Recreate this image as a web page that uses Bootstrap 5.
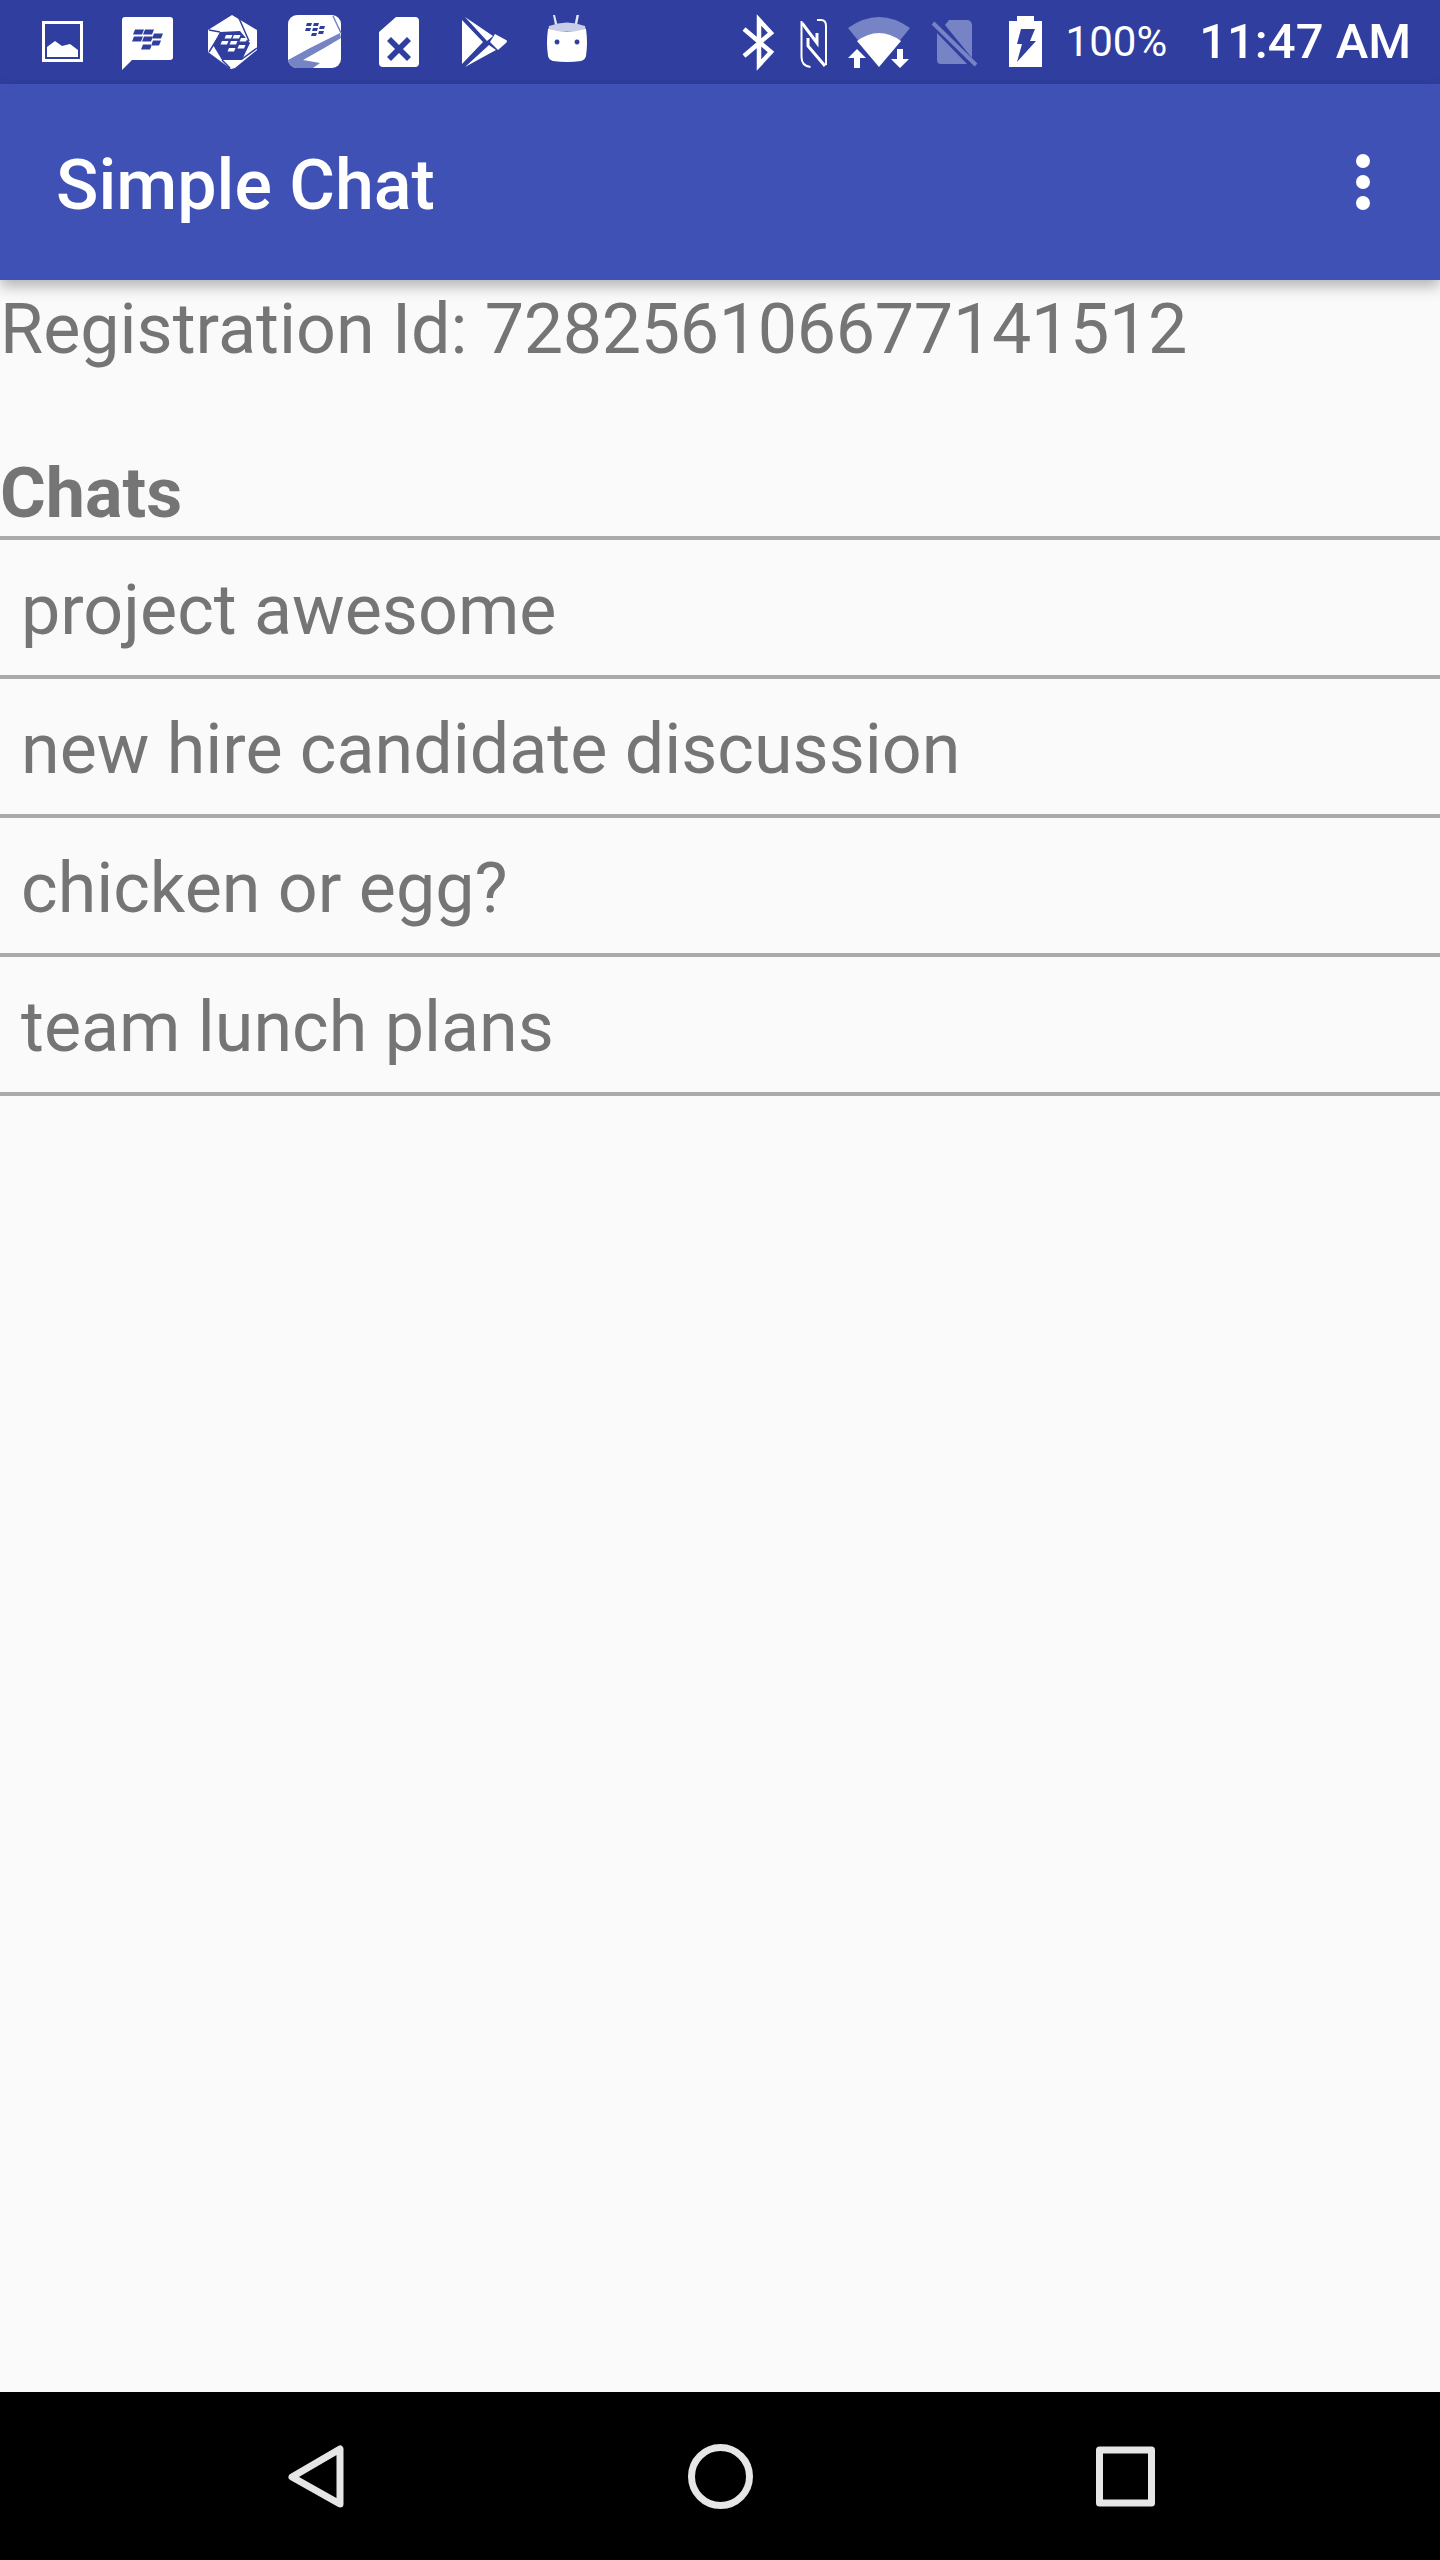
<!DOCTYPE html>
<html lang="en">
<head>
    <meta charset="UTF-8">
    <meta name="viewport" content="width=device-width, initial-scale=1.0">
    <title>Simple Chat</title>
    <link href="https://cdn.jsdelivr.net/npm/bootstrap@5.3.2/dist/css/bootstrap.min.css" rel="stylesheet">
    <style>
        body {
            background-color: #fafafa;
            color: #757575;
            font-family: Roboto, "Liberation Sans", sans-serif;
            font-size: 70px;
            line-height: 82px;
        }

        .status-strip {
            height: 84px;
            background: #303f9f;
            color: #fff;
            padding-left: 21px;
            padding-right: 29px;
        }

        .status-strip svg {
            display: block;
            height: 84px;
            fill: #fff;
        }

        .status-cell { width: 84px; }
        .sys-bt { width: 58px; }
        .sys-nfc { width: 50px; }
        .sys-wifi { width: 83px; }
        .sys-sim { width: 73px; }
        .sys-batt { width: 61px; }
        .battery-text { font-size: 42px; line-height: 84px; margin-left: 12px; }
        .clock-text { font-size: 49px; line-height: 84px; font-weight: 500; margin-left: 32px; }

        .app-strip {
            height: 196px;
            background: #3f51b5;
            color: #fff;
            padding-left: 56px;
            padding-right: 70px;
            box-shadow: 0 6px 14px rgba(0, 0, 0, .3);
            position: relative;
            font-weight: 500;
        }

        .app-title { padding-top: 6px; }
        .menu-dots { gap: 7px; }

        .menu-dot {
            width: 14px;
            height: 14px;
            background: #fff;
            border-radius: 50%;
        }

        .reg-line { padding-top: 8px; }
        .reg-digits { letter-spacing: -.33px; }
        .chats-head { margin-top: 82px; padding-bottom: 2px; font-weight: 700; }

        .chat-rows { border-radius: 0; border-top: 4px solid #aaa; }
        .chat-rows .list-group-item,
        .chat-rows .list-group-item:last-child {
            height: 139px;
            padding: 5px 0 0 21px;
            background: transparent;
            color: #757575;
            border: 0;
            border-bottom: 4px solid #aaa;
            display: flex;
            align-items: center;
        }

        .nav-strip { height: 168px; background: #000; }
        .nav-cell { width: 480px; height: 168px; }
        .nav-strip svg { display: block; fill: none; stroke: #e6e6e6; stroke-width: 7; }
    </style>
</head>

<body class="d-flex flex-column vh-100 overflow-hidden">
    <div class="status-strip d-flex align-items-center flex-shrink-0">
        <!-- notification icons, one 84px cell each -->
        <svg class="status-cell" viewBox="21 0 84 84">
            <path fill-rule="evenodd" d="M42 21h41v41H42zM45 24v35h35V24z"/>
            <path d="M47 57V47l8-6 7 5 8-2 8 6v7z"/>
        </svg>
        <svg class="status-cell" viewBox="105 0 84 84">
            <path fill-rule="evenodd" d="M125 17h45a3 3 0 0 1 3 3v37a3 3 0 0 1-3 3h-38l-10 10V20a3 3 0 0 1 3-3zM135 29.500l-2 5h9l2-5zM145 29.500l-2 5h9l2-5zM134 36.500l-2 5h9l2-5zM144 36.500l-2 5h9l2-5zM154 33.500l-2 5h9l2-5zM153 40.500l-2 5h8l2-5zM143 44.500l-2 5h9l2-5z"/>
        </svg>
        <svg class="status-cell" viewBox="189 0 84 84">
            <path fill-rule="evenodd" d="M232 15l25 15v20l-22 18-4 1-23-17V30zM220 32l-7 13 9 15h20l8-17-10-12z"/>
            <path d="M226 35l-1.500 3.500h6.500l1.500-3.500zM234 35l-1.500 3.500h6.500l1.500-3.500zM222 41l-1.500 3.500h6.500l1.500-3.500zM231 41l-1.500 3.500h6.500l1.500-3.500zM241 38l-1.500 3.500h6.500l1.500-3.500zM239 45l-1.500 3.500h6.500l1.500-3.500zM229 48l-1.500 3.500h6.500l1.500-3.500z"/>
            <path d="M238 16l11 25M257 48l-15 11M230 68l-8-8M209 52l12-19M209 30l11 2" fill="none" stroke="#303f9f" stroke-width="1.500"/>
        </svg>
        <svg class="status-cell" viewBox="273 0 84 84">
            <rect x="288" y="15" width="53" height="53" rx="9"/>
            <path d="M288 60l22-12 30-15 1 5-15 9-23 13 17 3-7 5h-15a9 9 0 0 1-10-8z" fill="#7683c4"/>
            <path d="M333 16l8 17" fill="none" stroke="#7683c4" stroke-width="1.500"/>
            <path d="M307 23l-1 3h5l1-3zM314 23l-1 3h5l1-3zM306 28l-1 3h5l1-3zM313 28l-1 3h5l1-3zM320 26l-1 3h5l1-3zM319 31l-1 3h5l1-3zM312 33l-1 3h5l1-3z" fill="#303f9f"/>
        </svg>
        <svg class="status-cell" viewBox="357 0 84 84">
            <path fill-rule="evenodd" d="M396 17h19a4 4 0 0 1 4 4v42a4 4 0 0 1-4 4h-32a4 4 0 0 1-4-4V32zM391 37l-4 4 8 8-8 8 4 4 8-8 8 8 4-4-8-8 8-8-4-4-8 8z"/>
        </svg>
        <svg class="status-cell" viewBox="441 0 84 84">
            <path d="M462 20v44l21-22zM465 17l28 19-6 5zM495 34l11 6q2 1 0 3l-8 7-8-8zM489 45l7 5-31 17z"/>
        </svg>
        <svg class="status-cell" viewBox="525 0 84 84">
            <path d="M555 15l2.500 10h-2.500l-2-10zM579 15l-2 10h-2.500l2-10z" fill="#e4e6f4"/>
            <path d="M549 26q18-7 36 0l1 5H548z" fill="#c8cde8"/>
            <path fill-rule="evenodd" d="M548 29q19 5 38 0 2 14 0 27-1 4-5 5-14 2-28 0-4-1-5-5-2-13 0-27zM557 39.500a2.500 2.500 0 1 0 .1 0zM577 39.500a2.500 2.500 0 1 0 .1 0z"/>
        </svg>

        <!-- system icons -->
        <svg class="sys-bt ms-auto" viewBox="730 0 58 84">
            <path d="M745 29l27 23-12 13V20l12 13-27 23" fill="none" stroke="#fff" stroke-width="4.500"/>
        </svg>
        <svg class="sys-nfc" viewBox="788 0 50 84">
            <path d="M802.500 21v36q0 9 9 10M818 20h4q5 0 5 6v39" fill="none" stroke="#fff" stroke-width="2"/>
            <path d="M803 23l15 20V33M809 38v8l17 20" fill="none" stroke="#fff" stroke-width="3"/>
        </svg>
        <svg class="sys-wifi" viewBox="838 0 83 84">
            <path d="M849 28q31-22 62 0l-31 38z" fill="#7683c4"/>
            <path d="M858 41q22-16 44 0l-22 26z"/>
            <path d="M855 68v-10h-6l9-9 9 9h-6v10zM898 49h6v10h6l-9 9-9-9h6z" stroke="#303f9f" stroke-width="2" paint-order="stroke"/>
        </svg>
        <svg class="sys-sim" viewBox="921 0 73 84">
            <path d="M950 20h18a5 5 0 0 1 5 5v33l-27-33zM938 33l30 31h-26a4 4 0 0 1-4-4z" fill="#7683c4"/>
            <path d="M934 23l43 42" fill="none" stroke="#7683c4" stroke-width="4"/>
        </svg>
        <svg class="sys-batt" viewBox="994 0 61 84">
            <path fill-rule="evenodd" d="M1018 16h17v5h8v46h-33V21h8zM1022 29l-4 15h5l-5 18 19-21h-6l5-12z"/>
        </svg>
        <span class="battery-text">100%</span>
        <span class="clock-text">11:47 AM</span>
    </div>

    <div class="app-strip d-flex align-items-center justify-content-between flex-shrink-0">
        <span class="app-title">Simple Chat</span>
        <div class="menu-dots d-flex flex-column">
            <span class="menu-dot"></span>
            <span class="menu-dot"></span>
            <span class="menu-dot"></span>
        </div>
    </div>

    <main class="flex-grow-1">
        <div class="reg-line">Registration Id: <span class="reg-digits">728256106677141512</span></div>
        <div class="chats-head">Chats</div>
        <ul class="list-group list-group-flush chat-rows">
            <li class="list-group-item">project awesome</li>
            <li class="list-group-item">new hire candidate discussion</li>
            <li class="list-group-item">chicken or egg?</li>
            <li class="list-group-item">team lunch plans</li>
        </ul>
    </main>

    <div class="nav-strip d-flex align-items-center flex-shrink-0">
        <svg class="nav-cell" viewBox="0 2392 480 168">
            <path d="M340 2449v55l-48-27z" stroke-linejoin="round"/>
        </svg>
        <svg class="nav-cell" viewBox="480 2392 480 168">
            <circle cx="720.500" cy="2476.500" r="29"/>
        </svg>
        <svg class="nav-cell" viewBox="960 2392 480 168">
            <rect x="1099.500" y="2450" width="52" height="53" stroke-linejoin="round"/>
        </svg>
    </div>

    <script src="https://cdn.jsdelivr.net/npm/bootstrap@5.3.2/dist/js/bootstrap.bundle.min.js"></script>
</body>

</html>
